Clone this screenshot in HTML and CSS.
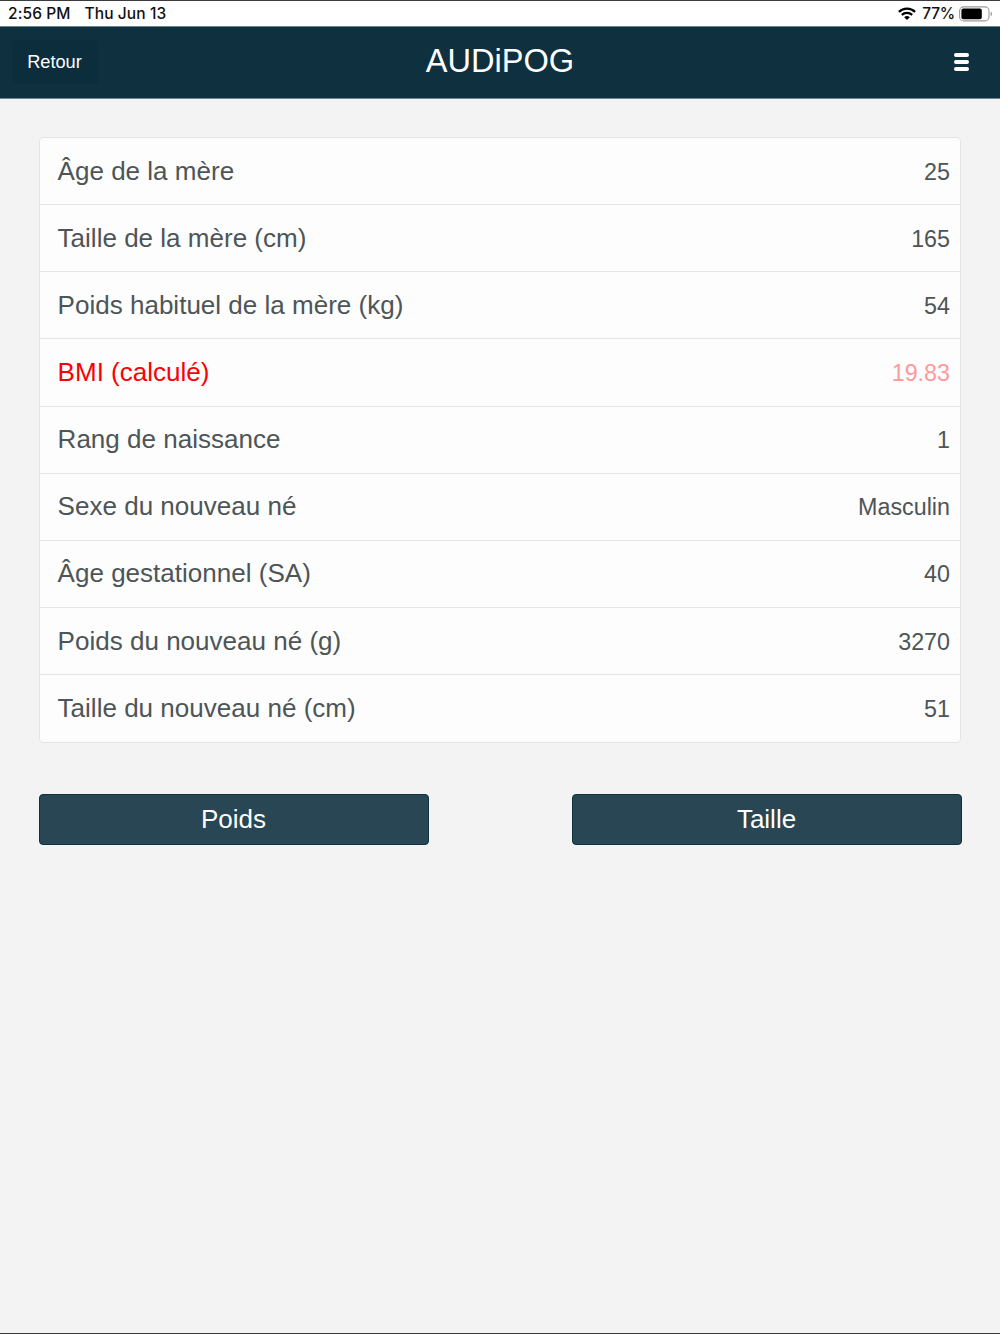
FILE: index.html
```html
<!DOCTYPE html>
<html lang="fr">
<head>
    <meta charset="UTF-8">
    <meta name="viewport" content="width=device-width, initial-scale=1.0">
    <title>AUDiPOG</title>
    <link rel="stylesheet" href="styles.css">
</head>
<body>
    <div class="status-bar">
        <div class="status-left">
            <span class="status-time">2:56 PM</span>
            <span class="status-date">Thu Jun 13</span>
        </div>
        <div class="status-right">
            <svg class="wifi" viewBox="0 0 18 13" width="18" height="13">
                <path d="M0.9 4.9 C5.3 0.5 12.7 0.5 17.1 4.9" fill="none" stroke="#000" stroke-width="2.2"/>
                <path d="M3.8 7.9 C6.7 5.1 11.3 5.1 14.2 7.9" fill="none" stroke="#000" stroke-width="2.2"/>
                <path d="M6.2 10.2 C7.8 8.7 10.2 8.7 11.8 10.2 L9 13 Z" fill="#000"/>
            </svg>
            <span class="status-percent">77%</span>
            <svg class="battery" viewBox="0 0 34 16" width="34" height="16">
                <rect x="0.6" y="0.9" width="29.4" height="14" rx="4" fill="none" stroke="#9c9c9c" stroke-width="1.1"/>
                <rect x="2.4" y="2.6" width="20.4" height="10.6" rx="2" fill="#000"/>
                <path d="M31.6 5.4 C33.5 6.2 33.5 9.4 31.6 10.2 Z" fill="#9c9c9c"/>
            </svg>
        </div>
    </div>

    <header class="header">
        <button class="back-btn">Retour</button>
        <h1>AUDiPOG</h1>
        <button class="menu-btn" aria-label="Menu">
            <span></span>
            <span></span>
            <span></span>
        </button>
    </header>

    <main class="content">
        <ul class="list">
            <li><span class="label">Âge de la mère</span><span class="value">25</span></li>
            <li><span class="label">Taille de la mère (cm)</span><span class="value">165</span></li>
            <li><span class="label">Poids habituel de la mère (kg)</span><span class="value">54</span></li>
            <li class="computed"><span class="label">BMI (calculé)</span><span class="value">19.83</span></li>
            <li><span class="label">Rang de naissance</span><span class="value">1</span></li>
            <li><span class="label">Sexe du nouveau né</span><span class="value">Masculin</span></li>
            <li><span class="label">Âge gestationnel (SA)</span><span class="value">40</span></li>
            <li><span class="label">Poids du nouveau né (g)</span><span class="value">3270</span></li>
            <li><span class="label">Taille du nouveau né (cm)</span><span class="value">51</span></li>
        </ul>

        <div class="actions">
            <button class="action-btn">Poids</button>
            <button class="action-btn">Taille</button>
        </div>
    </main>
</body>
</html>
```
FILE: styles.css
```css
* {
    box-sizing: border-box;
}

body {
    margin: 0;
    height: 1334px;
    background-color: #f3f3f3;
    border-top: 1px solid #3c3c3e;
    border-bottom: 1px solid #3c3c3e;
    font-family: "Liberation Sans", Arial, sans-serif;
    color: #4d5557;
    overflow: hidden;
}

button {
    font-family: inherit;
    margin: 0;
    padding: 0;
    border: none;
}

/* status bar */
.status-bar {
    display: flex;
    justify-content: space-between;
    align-items: center;
    height: 25px;
    padding: 0 7px 0 8px;
    background-color: #fff;
    font-family: Inter, sans-serif;
    font-size: 15.5px;
    font-weight: 500;
    letter-spacing: 0.1px;
    color: #111;
}

.status-left {
    display: flex;
    gap: 14px;
}

.status-right {
    display: flex;
    align-items: center;
}

.status-percent {
    margin: 0 4px 0 6px;
    letter-spacing: -0.2px;
}

/* header */
.header {
    display: grid;
    grid-template-columns: 1fr auto 1fr;
    align-items: center;
    height: 73px;
    padding: 0 31px 1px 12px;
    background-color: #0f303f;
    border-top: 1px solid #6f858e;
    border-bottom: 1px solid #6f858e;
    color: #fff;
}

.header h1 {
    margin: 0 0 2px 19px;
    font-size: 32.6px;
    font-weight: normal;
}

.back-btn {
    width: 86px;
    height: 44px;
    padding-right: 1px;
    background-color: #0b2d3c;
    border-radius: 4px;
    color: #fff;
    font-size: 18.2px;
}

.menu-btn {
    display: flex;
    flex-direction: column;
    gap: 3px;
    width: 15px;
    justify-self: end;
    background: none;
}

.menu-btn span {
    height: 4px;
    border-radius: 2px;
    background-color: #fff;
}

/* list */
.content {
    padding: 38px 39px 0;
}

.list {
    margin: 0;
    padding: 0;
    list-style: none;
    background-color: #fdfdfd;
    border: 1px solid #e4e4e4;
    border-radius: 4px;
}

.list li {
    display: flex;
    justify-content: space-between;
    align-items: center;
    height: 67.15px;
    padding: 0 10px 0 17.6px;
    border-bottom: 1px solid #e4e4e4;
}

.list li:last-child {
    height: 66.4px;
    border-bottom: none;
}

.label {
    font-size: 26.04px;
}

.value {
    padding-top: 2px;
    font-size: 23.3px;
}

.computed .label {
    color: #fb0007;
}

.computed .value {
    color: #fd9a9b;
}

/* buttons */
.actions {
    display: flex;
    justify-content: space-between;
    margin: 51px -0.5px 0;
}

.action-btn {
    width: 390px;
    height: 51.5px;
    background-color: #284653;
    border: 1px solid #0f303f;
    border-radius: 4px;
    color: #fff;
    font-size: 26px;
}
```
